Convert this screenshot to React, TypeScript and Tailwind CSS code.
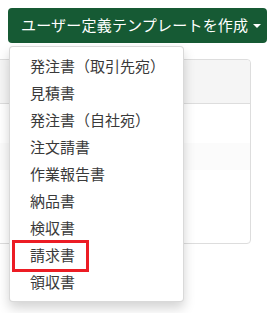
import React from "react";

const items = [
  "発注書（取引先宛）",
  "見積書",
  "発注書（自社宛）",
  "注文請書",
  "作業報告書",
  "納品書",
  "検収書",
  "請求書",
  "領収書",
];

const font = { fontFamily: '"Noto Sans CJK JP", "Noto Sans", sans-serif' };

export default function App() {
  return (
    <div className="relative w-[273px] h-[313px] overflow-hidden bg-white" style={font}>
      <div className="flex flex-col pt-2">
        <div className="relative pl-2">
          <button className="flex h-[35px] w-[259px] items-center rounded-[4px] bg-[#165a34] pl-[13px] text-[15px] tracking-[0.2px] text-white">
            <span>ユーザー定義テンプレートを作成</span>
            <span className="ml-[5px] mt-[1px] h-0 w-0 border-x-[4px] border-t-[4px] border-x-transparent border-t-white" />
          </button>

          {/* dropdown */}
          <div className="absolute left-[9px] top-[38px] z-10 w-[175px] rounded-[4px] border border-[rgba(0,0,0,0.15)] bg-white pt-[5px] pb-[6px] shadow-[0_6px_12px_rgba(0,0,0,0.175)]">
            {items.map((label) => (
              <div key={label} className="h-[27px] whitespace-nowrap px-5 text-[15px] leading-[27px] text-[#3a3a3a]">
                {label}
              </div>
            ))}
            <div className="pointer-events-none absolute left-[2px] top-[193px] h-[32px] w-[77px] border-[3px] border-[#ec1c24]" />
          </div>
        </div>

        {/* panel behind */}
        <div className="-ml-[4px] mr-[22px] mt-[16px] h-[185px] rounded-[4px] border border-[#dddddd]">
          <div className="h-[44px] rounded-t-[4px] border-b border-[#dddddd] bg-[#f5f5f5]" />
          <div className="mt-[39px] h-[27px] bg-[#fbfbfb]" />
        </div>
      </div>
    </div>
  );
}
